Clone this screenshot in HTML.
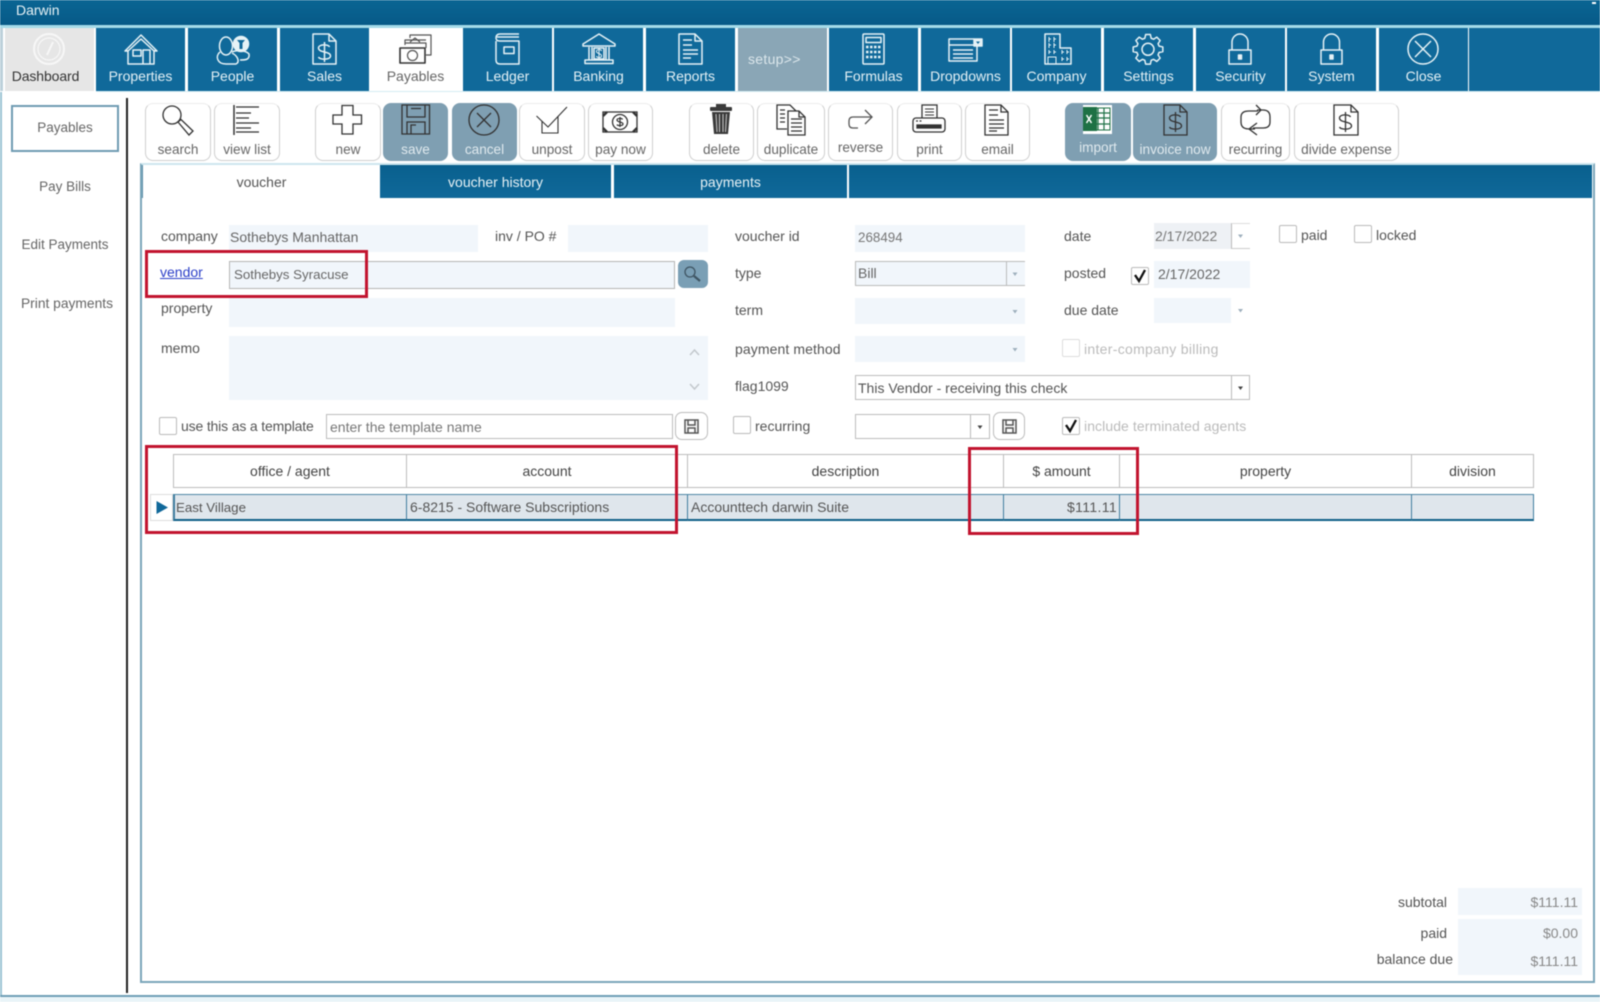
<!DOCTYPE html>
<html lang="en"><head><meta charset="utf-8"><title>Darwin</title>
<style>
html,body{margin:0;padding:0;background:#fff;width:1600px;height:1002px;overflow:hidden}
#w{position:relative;width:1600px;height:1002px;overflow:hidden;background:#fff;font-family:"Liberation Sans",sans-serif;font-size:14px;color:#555;filter:blur(.45px)}
#w div{position:absolute;box-sizing:border-box}
.n{top:28px;height:63px;width:89px;background:#10699a;color:#e3f0f5;text-align:center;padding-top:40px;line-height:17px}
.b{top:103px;height:58px;background:#fff;border:1px solid #cfcfcf;border-top-color:#ececec;border-radius:8px;text-align:center;padding-top:37px;line-height:18px;color:#666;font-size:13.6px}
.a{background:#7f9fb2;border-color:#7f9fb2;color:#dfe9ee}
.t{line-height:16px;height:16px;white-space:nowrap}
.f{background:#f1f6fb}
.g{background:#fff;border:1px solid #bdbdbd}
.c{background:#fff;border:1px solid #bbb;border-radius:2px;width:18px;height:18px}
.s{text-align:center;color:#666;width:108px;left:11px;font-size:13.5px}
.r{border:3px solid #c2142f}
.h{top:454px;height:34px;background:#fff;border:1px solid #bdbdbd;border-left:0;text-align:center;line-height:33px;color:#444}
.o{top:494px;height:27px;background:#dfe6ec;border-top:1px solid #4f88a6;border-bottom:2px solid #0e5f87;border-right:1px solid #3f7d9f;line-height:25px;padding-left:3px;color:#555;white-space:nowrap}
.l{color:#bbb}
svg{position:absolute;left:0;top:0}
.W{fill:none;stroke:#e6f2f6;stroke-width:1.5;stroke-linejoin:round}
.D{fill:none;stroke:#333;stroke-width:1.3;stroke-linejoin:round}
.Y{fill:none;stroke:#333;stroke-width:1.3}
</style></head><body><div id="w">

<div style="left:0;top:0;width:1600px;height:25px;background:linear-gradient(#0a6593,#075a88)"></div>
<div class="t" style="left:16px;top:2px;color:#e6f1f5">Darwin</div>
<div style="left:1592px;top:2px;width:4px;height:2px;background:#fff"></div>
<div style="left:0;top:25px;width:1600px;height:3px;background:#a5dbe9"></div>
<div style="left:0;top:28px;width:3px;height:63px;background:#bcd0da"></div>
<div style="left:1469px;top:28px;width:131px;height:63px;background:#10699a"></div>
<div style="left:96px;top:91px;width:1504px;height:1px;background:#d5edf3"></div>

<div class="n" style="left:5px;background:#e6e6e6;color:#333;text-indent:-8px;letter-spacing:-.1px">Dashboard</div>
<div class="n" style="left:96px">Properties</div>
<div class="n" style="left:188px">People</div>
<div class="n" style="left:280px">Sales</div>
<div class="n" style="left:371px;background:#fff;color:#666">Payables</div>
<div class="n" style="left:463px">Ledger</div>
<div class="n" style="left:554px">Banking</div>
<div class="n" style="left:646px">Reports</div>
<div class="n" style="left:738px;background:#8aa6b6;color:#dbe6eb;padding:23px 0 0 10px;text-align:left;letter-spacing:.3px">setup&gt;&gt;</div>
<div class="n" style="left:829px">Formulas</div>
<div class="n" style="left:921px">Dropdowns</div>
<div class="n" style="left:1012px">Company</div>
<div class="n" style="left:1104px">Settings</div>
<div class="n" style="left:1196px">Security</div>
<div class="n" style="left:1287px">System</div>
<div class="n" style="left:1379px">Close</div>

<div style="left:11px;top:105px;width:108px;height:47px;border:2px solid #6f9cb3"></div>
<div class="t s" style="top:120px">Payables</div>
<div class="t s" style="top:179px">Pay Bills</div>
<div class="t s" style="top:237px">Edit Payments</div>
<div class="t s" style="top:296px;left:13px;font-size:13.8px">Print payments</div>
<div style="left:126px;top:98px;width:2px;height:895px;background:#222"></div>

<div class="b" style="left:145px;width:66px">search</div>
<div class="b" style="left:214px;width:66px">view list</div>
<div class="b" style="left:315px;width:66px">new</div>
<div class="b a" style="left:383px;width:65px">save</div>
<div class="b a" style="left:452px;width:65px">cancel</div>
<div class="b" style="left:519px;width:66px">unpost</div>
<div class="b" style="left:588px;width:65px">pay now</div>
<div class="b" style="left:689px;width:65px">delete</div>
<div class="b" style="left:757px;width:68px">duplicate</div>
<div class="b" style="left:828px;width:65px;padding-top:35px">reverse</div>
<div class="b" style="left:897px;width:65px">print</div>
<div class="b" style="left:965px;width:65px">email</div>
<div class="b a" style="left:1065px;width:66px;padding-top:35px">import</div>
<div class="b a" style="left:1133px;width:84px">invoice now</div>
<div class="b" style="left:1221px;width:69px">recurring</div>
<div class="b" style="left:1294px;width:105px">divide expense</div>

<div style="left:140px;top:163px;width:1455px;height:820px;border:2px solid #7aa6ba;border-top:2px solid #cde6ee;background:#fff"></div>
<div style="left:142px;top:165px;width:1px;height:33px;background:#5f90aa"></div>
<div style="left:380px;top:165px;width:231px;height:33px;background:linear-gradient(#09608e,#10699a)"></div>
<div style="left:614px;top:165px;width:233px;height:33px;background:linear-gradient(#09608e,#10699a)"></div>
<div style="left:849px;top:165px;width:743px;height:33px;background:linear-gradient(#09608e,#10699a)"></div>
<div class="t" style="left:145px;top:174px;width:233px;text-align:center">voucher</div>
<div class="t" style="left:380px;top:174px;width:231px;text-align:center;color:#e6f1f5">voucher history</div>
<div class="t" style="left:614px;top:174px;width:233px;text-align:center;color:#e6f1f5">payments</div>

<div class="t" style="left:161px;top:228px">company</div>
<div class="f" style="left:229px;top:225px;width:249px;height:27px"></div>
<div class="t" style="left:230px;top:229px;color:#666">Sothebys Manhattan</div>
<div class="t" style="left:495px;top:228px">inv / PO #</div>
<div class="f" style="left:568px;top:225px;width:140px;height:27px"></div>

<div class="t" style="left:160px;top:264px;color:#2b3fc8;text-decoration:underline">vendor</div>
<div class="f" style="left:229px;top:261px;width:446px;height:28px;border:1px solid #b5b5b5"></div>
<div class="t" style="left:234px;top:267px;color:#666;font-size:13.3px">Sothebys Syracuse</div>
<div style="left:678px;top:260px;width:30px;height:28px;background:#7a9fb5;border-radius:6px"></div>

<div class="t" style="left:161px;top:300px">property</div>
<div class="f" style="left:229px;top:298px;width:446px;height:29px"></div>

<div class="t" style="left:161px;top:340px">memo</div>
<div class="f" style="left:229px;top:336px;width:479px;height:64px"></div>

<div class="c" style="left:159px;top:417px"></div>
<div class="t" style="left:181px;top:418px;letter-spacing:-.16px">use this as a template</div>
<div class="g" style="left:326px;top:414px;width:347px;height:25px"></div>
<div class="t" style="left:330px;top:419px;color:#777">enter the template name</div>
<div class="g" style="left:675px;top:412px;width:33px;height:28px;border-radius:7px"></div>

<div class="t" style="left:735px;top:228px">voucher id</div>
<div class="f" style="left:855px;top:225px;width:170px;height:27px"></div>
<div class="t" style="left:858px;top:230px;color:#777;font-size:13.4px">268494</div>
<div class="t" style="left:735px;top:265px">type</div>
<div class="f" style="left:855px;top:261px;width:170px;height:25px;border:1px solid #bbb;border-right:0"></div>
<div style="left:1006px;top:261px;width:1px;height:25px;background:#bbb"></div>
<div class="t" style="left:858px;top:265px;color:#666">Bill</div>
<div class="t" style="left:735px;top:302px">term</div>
<div class="f" style="left:855px;top:298px;width:170px;height:26px"></div>
<div class="t" style="left:735px;top:341px;letter-spacing:.1px">payment method</div>
<div class="f" style="left:855px;top:336px;width:170px;height:26px"></div>
<div class="t" style="left:735px;top:378px">flag1099</div>
<div class="g" style="left:855px;top:375px;width:395px;height:25px"></div>
<div style="left:1231px;top:375px;width:1px;height:25px;background:#bbb"></div>
<div class="t" style="left:858px;top:380px;color:#555">This Vendor - receiving this check</div>

<div class="c" style="left:733px;top:416px"></div>
<div class="t" style="left:755px;top:418px">recurring</div>
<div class="g" style="left:855px;top:414px;width:135px;height:25px"></div>
<div style="left:970px;top:414px;width:1px;height:25px;background:#bbb"></div>
<div class="g" style="left:993px;top:412px;width:32px;height:28px;border-radius:7px"></div>

<div class="t" style="left:1064px;top:228px">date</div>
<div class="f" style="left:1154px;top:223px;width:77px;height:26px;background:#eef1f5"></div>
<div style="left:1231px;top:223px;width:19px;height:26px;border-left:1px solid #bbb;border-top:1px solid #ddd;border-bottom:1px solid #ccc"></div>
<div class="t" style="left:1155px;top:228px;color:#777">2/17/2022</div>
<div class="t" style="left:1064px;top:265px">posted</div>
<div class="c" style="left:1131px;top:267px"></div>
<div class="f" style="left:1154px;top:261px;width:96px;height:27px"></div>
<div class="t" style="left:1158px;top:266px;color:#666">2/17/2022</div>
<div class="t" style="left:1064px;top:302px">due date</div>
<div class="f" style="left:1154px;top:298px;width:77px;height:25px"></div>
<div class="c" style="left:1062px;top:339px;border-color:#ddd"></div>
<div class="t l" style="left:1084px;top:341px;letter-spacing:.3px">inter-company billing</div>
<div class="c" style="left:1062px;top:417px"></div>
<div class="t l" style="left:1084px;top:418px;letter-spacing:.08px">include terminated agents</div>
<div class="c" style="left:1279px;top:225px"></div>
<div class="t" style="left:1301px;top:227px">paid</div>
<div class="c" style="left:1354px;top:225px"></div>
<div class="t" style="left:1376px;top:227px">locked</div>

<div class="h" style="left:173px;width:234px;border-left:1px solid #bdbdbd">office / agent</div>
<div class="h" style="left:407px;width:281px">account</div>
<div class="h" style="left:687px;width:317px;border-left:1px solid #bdbdbd;padding-right:0">description</div>
<div class="h" style="left:1004px;width:116px">$ amount</div>
<div class="h" style="left:1120px;width:292px">property</div>
<div class="h" style="left:1412px;width:122px">division</div>
<div style="left:150px;top:494px;width:23px;height:27px;border:1px solid #ddd;background:#fff"></div>
<div class="o" style="left:173px;width:234px;border-left:2px solid #3f7d9f;padding-left:1px;font-size:13.3px">East Village</div>
<div class="o" style="left:407px;width:281px">6-8215 - Software Subscriptions</div>
<div class="o" style="left:688px;width:316px">Accounttech darwin Suite</div>
<div class="o" style="left:1004px;width:116px;text-align:right;padding-right:2px;letter-spacing:.35px">$111.11</div>
<div class="o" style="left:1120px;width:292px"></div>
<div class="o" style="left:1412px;width:122px"></div>

<div class="r" style="left:145px;top:250px;width:223px;height:48px"></div>
<div class="r" style="left:145px;top:445px;width:533px;height:89px"></div>
<div class="r" style="left:968px;top:447px;width:171px;height:88px"></div>

<div class="f" style="left:1458px;top:888px;width:124px;height:27px"></div>
<div class="f" style="left:1458px;top:919px;width:124px;height:56px"></div>
<div class="t" style="left:1300px;top:894px;width:147px;text-align:right">subtotal</div>
<div class="t" style="left:1300px;top:925px;width:147px;text-align:right">paid</div>
<div class="t" style="left:1300px;top:951px;width:153px;text-align:right">balance due</div>
<div class="t" style="left:1458px;top:894px;width:120px;text-align:right;color:#888">$111.11</div>
<div class="t" style="left:1458px;top:925px;width:120px;text-align:right;color:#888">$0.00</div>
<div class="t" style="left:1458px;top:953px;width:120px;text-align:right;color:#888">$111.11</div>

<div style="left:0;top:995px;width:1600px;height:7px;background:#e9f4f8;border-top:2px solid #6f9fb6"></div>
<div style="left:0;top:92px;width:2px;height:903px;background:#9cc4d4"></div>

<svg width="1600" height="1002" viewBox="0 0 1600 1002">
<!-- dashboard -->
<g fill="none" stroke="#f7f7f7" stroke-width="2"><circle cx="49" cy="49" r="15"/><circle cx="49" cy="49" r="11" stroke-width="1.2"/><path d="M47 55 L53 42"/></g>
<!-- house -->
<g class="W"><path d="M125 51 L141 35 L157 51 L154 51 L141 39 L128 51Z"/><path d="M128 50V64H154V50"/><rect x="133" y="50" width="8" height="6"/><path d="M143 64V50H150V64"/></g>
<!-- people -->
<g class="W"><ellipse cx="226" cy="46" rx="6.500" ry="9"/><path d="M220 52C215 56 217 64 226 64H236C240 62 238 56 232 53"/><circle cx="241" cy="44" r="7.500" fill="#e6f2f6"/><path d="M232 52C236 50 246 50 249 54C250 60 245 60 240 60"/><path d="M237 40h8l-2.500 3v6h-3v-6z" fill="#10699a" stroke="none"/></g>
<!-- sales -->
<g class="W"><path d="M313 34H329L336 41V64H313Z"/><path d="M329 34V41H336"/><g transform="translate(324.500 52)"><path d="M5 -5C4 -8 -6 -8 -6 -4C-6 1 6 -1 6 4C6 8 -5 8 -6 5M0 -10V10"/></g></g>
<!-- payables -->
<g fill="none" stroke="#555" stroke-width="1.200" stroke-linejoin="round"><path d="M410 38V35H431V55H426"/><path d="M405 43V40H426"/><rect x="400" y="48" width="25" height="15" stroke-width="1.600" stroke="#333"/><ellipse cx="412.500" cy="55.500" rx="5" ry="5"/><path d="M405 45V43H426V48M410 42l5-4 5 4"/></g>
<!-- ledger -->
<g class="W"><path d="M496 41V60Q496 64 500 64H519V41H500Q496 41 496 38Q496 34 500 34H519"/><path d="M497 37H519"/><rect x="504" y="47" width="10" height="6.500"/></g>
<!-- banking -->
<g class="W"><path d="M599 34L583 44V46H615V44Z"/><rect x="585" y="60" width="28" height="3.500"/><path d="M589 47V60M592 47V60M606 47V60M609 47V60"/><rect x="594" y="48" width="10" height="11"/><path d="M601.500 51C601 49 596.500 49 596.500 51.500C596.500 54 601.500 53 601.500 56C601.500 58 597 58 596.500 56M599 47.500V59.500" stroke-width="1"/></g>
<!-- reports -->
<g class="W"><path d="M679 34H695L702 41V64H679Z"/><path d="M695 34V41H702"/><path d="M683 40H692M683 45H692M683 50H698M683 54H698M683 58H691"/></g>
<!-- formulas -->
<g class="W"><rect x="863" y="34" width="21" height="30" rx="1"/><rect x="866" y="37.500" width="15" height="5"/><g stroke-dasharray="2.500 1.500" stroke-width="2.500"><path d="M866 47H881M866 52H881M866 57H881"/></g></g>
<!-- dropdowns -->
<g class="W"><path d="M974 39H949V61H977V46"/><path d="M949 45H974M953 50H973M953 54H973M953 58H973"/><rect x="974" y="39" width="8" height="7" fill="#e6f2f6"/><path d="M976 41.500h4l-2 2.500z" fill="#10699a" stroke="none"/></g>
<!-- company -->
<g class="W"><path d="M1045 64V34H1060V48H1071V64Z"/><path d="M1048 64V57H1056V64M1049 39h2M1049 37v5M1054 39h2M1054 37v5M1049 45h2M1049 43v5M1054 45h2M1054 43v5M1049 52h2M1049 50v4M1054 52h2M1054 50v4M1062 52h2M1062 50v4M1067 52h2M1067 50v4M1062 59h2M1062 57v4M1067 59h2M1067 57v4" stroke-width="1"/></g>
<!-- settings -->
<g class="W" transform="translate(1148 49.300)"><path d="M-3.170 -11.050L-2.350 -14.820L2.350 -14.820L3.170 -11.050L5.580 -10.060L8.820 -12.140L12.140 -8.820L10.060 -5.580L11.050 -3.170L14.820 -2.350L14.820 2.350L11.050 3.170L10.060 5.580L12.140 8.820L8.820 12.140L5.580 10.060L3.170 11.050L2.350 14.820L-2.350 14.820L-3.170 11.050L-5.580 10.060L-8.820 12.140L-12.140 8.820L-10.060 5.580L-11.050 3.170L-14.820 2.350L-14.820 -2.350L-11.050 -3.170L-10.060 -5.580L-12.140 -8.820L-8.820 -12.140L-5.580 -10.060Z"/><circle r="6"/></g>
<!-- locks -->
<g class="W"><rect x="1229" y="50" width="22" height="14"/><path d="M1232 50V42A8 8 0 0 1 1248 42V50"/><rect x="1238.500" y="55" width="3" height="4" fill="#e6f2f6"/><rect x="1321" y="50" width="21" height="14"/><path d="M1323.500 50V42A8 8 0 0 1 1339.500 42V50"/><rect x="1330" y="55" width="3" height="4" fill="#e6f2f6"/></g>
<!-- close -->
<g class="W"><circle cx="1423" cy="49" r="15"/><path d="M1415 41L1431 57M1431 41L1415 57"/></g>

<!-- search -->
<g class="Y"><circle cx="172" cy="115" r="9"/><path d="M178 122L181 119.500L193 131L189 135Z"/></g>
<!-- view list -->
<g class="Y"><path d="M234 105V135" stroke-width="1.500"/><path d="M236 107H259M236 113H251M236 118H249M236 123H259M236 128H251M236 132H259"/></g>
<!-- new -->
<path class="Y" d="M342 105.500H353V115H361.500V124H353V134H342V124H333V115H342Z"/>
<!-- save -->
<g class="Y" stroke-width="1.500"><path d="M402 105H429.500V134H402Z"/><path d="M407 105V117H425V105M411 108.500H421M407 134V122H425V134M411 134V125H416"/></g>
<!-- cancel -->
<g class="Y" stroke-width="1.200"><circle cx="484" cy="120" r="15"/><path d="M477 113L491 127M491 113L477 127"/></g>
<!-- unpost -->
<g fill="none" stroke="#333" stroke-width="1.100"><path d="M542 121V133H558V116"/><path d="M536.500 116L548 127L567 107"/></g>
<!-- pay now -->
<g class="Y" stroke-width="1.500"><rect x="603" y="112" width="34" height="20" fill="#fff"/><circle cx="620" cy="122" r="7.500"/><path d="M607 112l-4 4M633 112l4 4M607 132l-4-4M633 132l4-4" stroke-width="2.500"/><g transform="translate(620 122) scale(.5)"><path d="M5 -5C4 -8 -6 -8 -6 -4C-6 1 6 -1 6 4C6 8 -5 8 -6 5M0 -10V10" stroke-width="2.500"/></g></g>
<!-- delete -->
<g fill="#3a3a3a"><rect x="716" y="104" width="10" height="3"/><rect x="710" y="107" width="22" height="4" rx="1"/><path d="M712 112H730L728 134H714Z"/></g>
<path d="M716 114l1 18M719.500 114v18M723 114v18M726.500 114l-1 18" stroke="#c9c9c9" stroke-width="1" fill="none"/>
<!-- duplicate -->
<g class="Y"><path d="M787 129H777V105H790L796 111"/><path d="M788 111H799L805 117V135H788Z" fill="#fff"/><path d="M799 111V117H805M791 119H802M791 123H802M791 127H802M791 131H802M780 110H785M780 114H785M780 118H785M780 122H785"/></g>
<!-- reverse -->
<path d="M858 128H853Q849 128 849 124V121Q849 117 853 117H872M865 110L872 117L865 124" fill="none" stroke="#555" stroke-width="1.300"/>
<!-- print -->
<g class="Y" stroke-width="1.500"><path d="M922 118V105H937V118"/><path d="M925 109H934M925 112H934M925 115H934" stroke-width="1"/><rect x="913" y="118" width="32" height="14" rx="3"/><rect x="917" y="125" width="24" height="3" fill="#333"/><path d="M916 121h2M919.500 121h2"/></g>
<!-- email -->
<g class="Y"><path d="M985 105H1001L1008 112V135H985Z"/><path d="M1001 105V112H1008" /><path d="M989 110H998M989 115H998M989 120H1004M989 124H1004M989 128H1004M989 131H997"/></g>
<!-- excel -->
<rect x="1083" y="105" width="29" height="29" fill="#fff"/><rect x="1093" y="108" width="17" height="22" fill="#fff" stroke="#1e7145" stroke-width="1"/><path d="M1098 108V130M1104 108V130M1093 113H1110M1093 118H1110M1093 124H1110" stroke="#1e7145" stroke-width="1.200"/><rect x="1083" y="107" width="14" height="24" fill="#1e7145"/>
<path d="M1086.500 115l5 8M1091.500 115l-5 8" stroke="#fff" stroke-width="1.500"/>
<!-- invoice -->
<g class="Y" stroke="#1c2f3d"><path d="M1164 105H1180L1187 112V135H1164Z"/><path d="M1180 105V112H1187"/><g transform="translate(1175.500 122)"><path d="M5 -5C4 -8 -6 -8 -6 -4C-6 1 6 -1 6 4C6 8 -5 8 -6 5M0 -10V10"/></g></g>
<!-- recurring -->
<g class="Y" stroke-width="1.300"><path d="M1257 110H1263Q1270 110 1270 117V122Q1270 128 1263 128H1253"/><path d="M1255 129H1249Q1241 129 1241 122V117Q1241 111 1249 111H1258"/><path d="M1256 105L1261 110L1256 115M1257 123L1249 129L1257 135"/></g>
<!-- divide -->
<g class="Y"><path d="M1334 105H1351L1358 112V135H1334Z"/><path d="M1351 105V112H1358"/><g transform="translate(1345.500 122)"><path d="M5 -5C4 -8 -6 -8 -6 -4C-6 1 6 -1 6 4C6 8 -5 8 -6 5M0 -10V10"/></g></g>

<!-- vendor search icon -->
<g fill="none" stroke="#3f5563" stroke-width="1.300"><circle cx="690" cy="272" r="5"/><path d="M694 276L700 281" stroke-width="2.200"/></g>
<!-- memo scroll -->
<g fill="none" stroke="#c3c8cd" stroke-width="1.500"><path d="M690 355L694.500 350L699 355M690 384L694.500 389L699 384"/></g>
<!-- small save icons -->
<g fill="none" stroke="#555" stroke-width="1.500"><path d="M685 420H698V433H685Z"/><path d="M688 420V425H695V420M688 433V428H695V433"/><path d="M1003 420H1016V433H1003Z"/><path d="M1006 420V425H1013V420M1006 433V428H1013V433"/></g>
<!-- arrows -->
<g fill="#9fb0bd"><path d="M1238 234.500h5l-2.500 3.500zM1012.500 272.500h5l-2.500 3.500zM1012.500 310h5l-2.500 3.500zM1238 309h5l-2.500 3.500zM1012.500 348h5l-2.500 3.500z"/></g>
<g fill="#444"><path d="M1238 386.500h5l-2.500 3.500zM977.500 425.500h5l-2.500 3.500z"/></g>
<!-- checks -->
<g fill="none" stroke="#111" stroke-width="2.300"><path d="M1135 275L1139 281L1145 270M1066 425L1070 431L1076 420"/></g>
<!-- row marker -->
<path d="M156.500 501L168 507.500L156.500 514Z" fill="#10689a"/>
</svg>
</div></body></html>
